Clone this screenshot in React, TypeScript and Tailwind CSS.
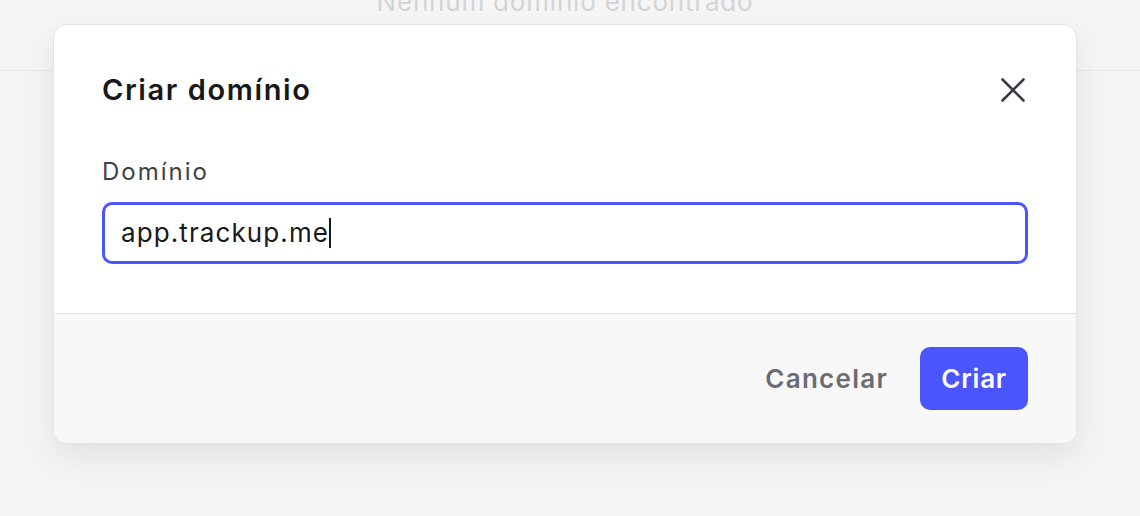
const font = { fontFamily: 'Inter, "Liberation Sans", sans-serif' };

const App = () => {
  return (
    <main className="relative h-[516px] w-[1140px] overflow-hidden bg-[#f4f4f4]" style={font}>
      {/* BACKGROUND PAGE */}
      <div className="flex h-[71px] items-start justify-center border-b border-[#e8e8e8] bg-[#f5f5f5] pr-[10px]">
        <p className="-mt-[14px] text-[26px] leading-[32px] tracking-[0.8px] text-[#d4d4d8]">Nenhum domínio encontrado</p>
      </div>

      {/* MODAL */}
      <div className="absolute left-[53px] top-[24px] w-[1024px] overflow-hidden rounded-[14px] border border-[#e4e4e7] bg-white shadow-[0_12px_32px_rgba(0,0,0,0.08)]">
        <div className="px-[48px] pb-[49px] pt-[47px]">
          <div className="flex items-center justify-between">
            <h2 className="text-[29px] font-semibold leading-[36px] tracking-[1.6px] text-[#18181b]">Criar domínio</h2>
            <button className="mr-[3px] text-[#3a3a44]">
              <svg width="24" height="24" viewBox="0 0 24 24" fill="none" stroke="currentColor" strokeWidth="2.6" strokeLinecap="round">
                <path d="M1.5 1.5l21 21M22.5 1.5l-21 21" />
              </svg>
            </button>
          </div>
          <label className="mt-[48px] block text-[24px] leading-[32px] tracking-[2px] text-[#3f3f46]">Domínio</label>
          <div className="mt-[14px] flex h-[62px] items-center rounded-[10px] border-[3px] border-[#4a55fb] px-[16px]">
            <span className="text-[26px] leading-[32px] tracking-[1.1px] text-[#18181b]">app.trackup.me</span>
            <span className="h-[30px] w-[2px] bg-[#18181b]" />
          </div>
        </div>
        <div className="flex items-center justify-end gap-[32px] border-t border-[#e4e4e7] bg-[#f8f8f8] px-[48px] py-[33px]">
          <button className="text-[26px] font-semibold leading-[32px] tracking-[1.3px] text-[#6b6b76]">Cancelar</button>
          <button className="h-[63px] rounded-[10px] bg-[#4a55fb] px-[21px] text-[26px] font-semibold leading-[32px] tracking-[0.8px] text-white">
            Criar
          </button>
        </div>
      </div>
    </main>
  );
};

export default App;
